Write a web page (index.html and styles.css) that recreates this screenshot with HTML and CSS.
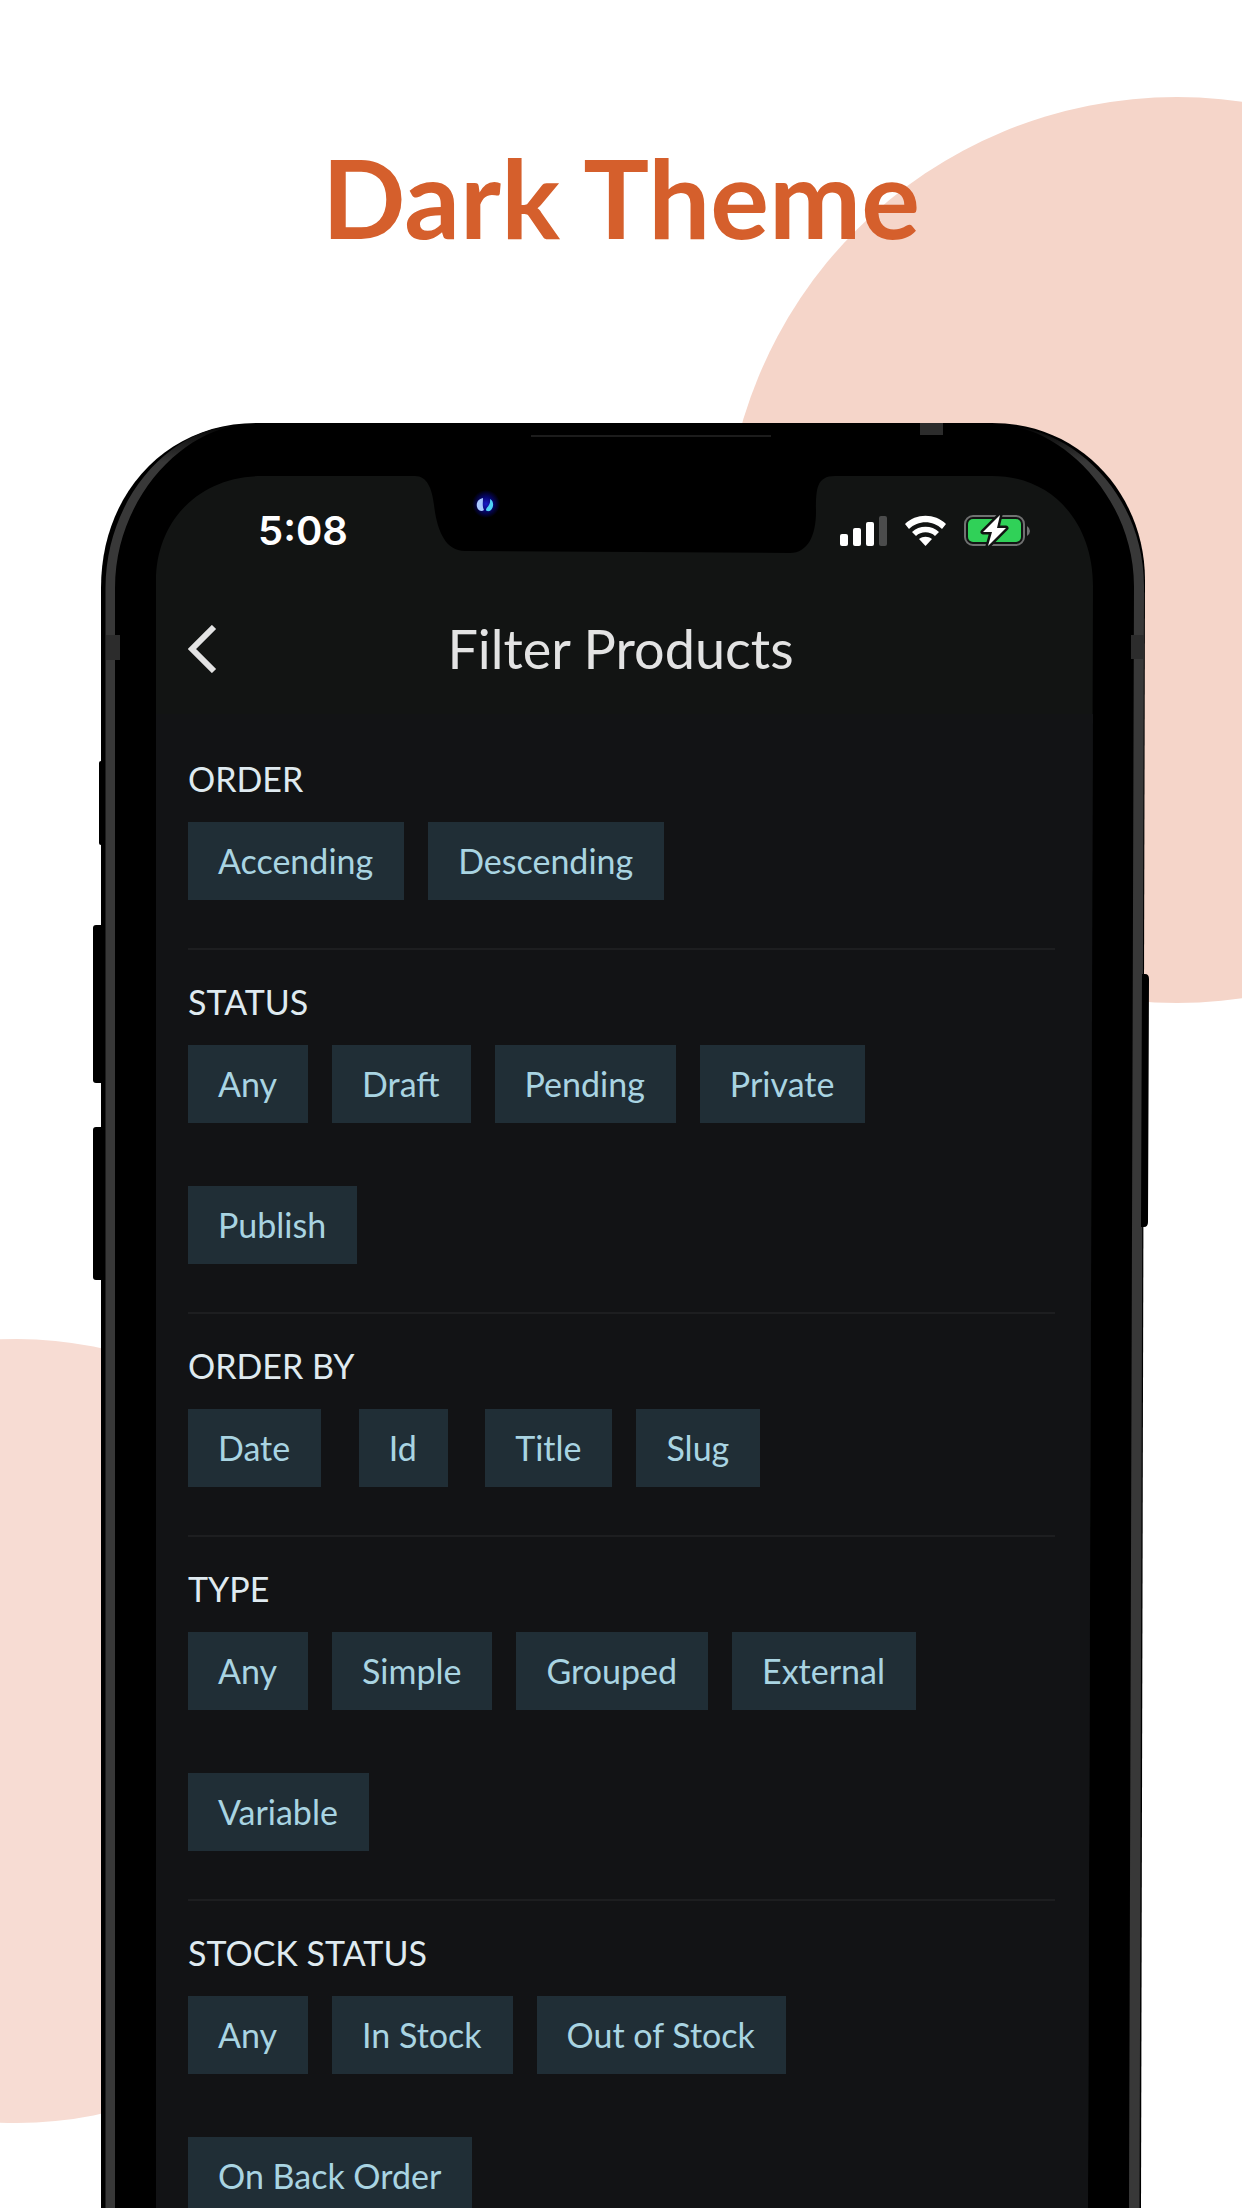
FILE: index.html
```html
<!DOCTYPE html>
<html lang="en">
<head>
<meta charset="utf-8">
<meta name="viewport" content="width=device-width, initial-scale=1">
<title>Dark Theme</title>
<link rel="stylesheet" href="styles.css">
</head>
<body>
<main class="poster">
  <div class="circle circle-right"></div>
  <div class="circle circle-left"></div>
  <h1 class="headline">Dark Theme</h1>

  <div class="phone">
    <svg class="frame" viewBox="93 423 1056 1785" aria-hidden="true">
      <defs>
        <radialGradient id="lens">
          <stop offset="0" stop-color="#1a1ac8"/>
          <stop offset=".5" stop-color="#06066e"/>
          <stop offset="1" stop-color="#000"/>
        </radialGradient>
        <linearGradient id="rail" x1="0" y1="423" x2="0" y2="620" gradientUnits="userSpaceOnUse">
          <stop offset=".03" stop-color="#080808"/>
          <stop offset=".2" stop-color="#383838"/>
        </linearGradient>
      </defs>
      <!-- side buttons -->
      <rect x="99" y="761" width="8" height="84" rx="2"/>
      <rect x="93" y="925" width="14" height="158" rx="3"/>
      <rect x="93" y="1127" width="14" height="153" rx="3"/>
      <!-- body -->
      <path d="M101 2208V588C101 492 168 423 256 423H992C1082 423 1145 496 1145 580L1141 2208Z"/>
      <path d="M105.500 2208V588C106 496 172 428 235 426C180 434 115 500 115 588V2208Z" fill="url(#rail)"/>
      <path d="M1144 586C1144 500 1080 432 1010 426C1065 432 1134 500 1134 586L1129 2208H1139.500Z" fill="url(#rail)"/>
      <path d="M1142 974h3q4 0 4 5l-1 243q0 5-4 5h-3z"/>
      <path d="M106 635h14v25h-14zM1131 635h13v24h-13zM920 423h23v12h-23z" fill="#2c2c2c"/>
      <path d="M531 436h240" stroke="#1c1c1c" stroke-width="2"/>
      <!-- screen -->
      <path fill="#121413" d="M156 2208V581C156 520 200 476 262 476H415C427 476 432 488 434 505C437 530 445 551 465 551L790 553C808 553 816 535 816 512C816 490 816 476 835 476H992C1052 476 1093 522 1093 586L1088 2208Z"/>
      <path fill="#121315" d="M156 714H1093L1088 2208H156Z"/>
      <!-- camera -->
      <circle cx="486" cy="504" r="14" fill="url(#lens)"/>
      <path d="M483 498c-5 1-7 5-6 9s5 5 7 3c-2-4-1-8-1-12z" fill="#a8c8ff"/>
      <path d="M490 499c4 2 4 8 1 11-2 2-5 1-5 0 0-3 5-4 4-11z" fill="#4fd3f5"/>
    </svg>

    <div class="screen">
      <div class="status-bar">
        <span class="clock">5:08</span>
        <svg class="status-icons" width="192" height="34" viewBox="0 0 192 34" role="img" aria-label="Signal, Wi-Fi, battery charging">
          <g fill="#fff">
            <rect x="0" y="20" width="8" height="12" rx="2"/>
            <rect x="13" y="14" width="8" height="18" rx="2"/>
            <rect x="26" y="8" width="8" height="24" rx="2"/>
            <rect x="39" y="2" width="8" height="30" rx="2" fill="#4b4c4c"/>
            <path d="M65 10C76-1 95-1 106 10L102 15C93 6 78 6 69 15Z"/>
            <path d="M72 18C79 11 92 11 99 18L95 22C90 17 81 17 76 22Z"/>
            <path d="M79 25C83 22 88 22 92 25L85.500 32Z"/>
          </g>
          <rect x="125" y="2" width="59" height="29" rx="8" fill="none" stroke="#707171" stroke-width="2"/>
          <rect x="128" y="5" width="53" height="23" rx="5" fill="#30d158"/>
          <path d="M187 12q3 2 3 5t-3 5z" fill="#707171"/>
          <path d="M160 1L143 18h9l-4 14 18-18h-9z" fill="#fff" stroke="#121413" stroke-width="5" stroke-linejoin="round" paint-order="stroke"/>
        </svg>
      </div>

      <header class="app-bar">
        <button class="back" type="button" aria-label="Back">
          <svg width="30" height="48" viewBox="0 0 30 48" aria-hidden="true"><path d="M26 2L4 24L26 46" fill="none" stroke="#e3e3e3" stroke-width="6"/></svg>
        </button>
        <h2 class="title">Filter Products</h2>
      </header>

      <form class="filters">
        <section class="group">
          <h3 class="label">ORDER</h3>
          <ul class="chips">
            <li><button class="chip" type="button">Accending</button></li>
            <li><button class="chip" type="button">Descending</button></li>
          </ul>
        </section>
        <section class="group">
          <h3 class="label">STATUS</h3>
          <ul class="chips">
            <li><button class="chip" type="button">Any</button></li>
            <li><button class="chip" type="button">Draft</button></li>
            <li><button class="chip" type="button">Pending</button></li>
            <li><button class="chip" type="button">Private</button></li>
            <li><button class="chip" type="button">Publish</button></li>
          </ul>
        </section>
        <section class="group">
          <h3 class="label">ORDER BY</h3>
          <ul class="chips">
            <li><button class="chip" type="button">Date</button></li>
            <li><button class="chip" type="button">Id</button></li>
            <li><button class="chip" type="button">Title</button></li>
            <li><button class="chip" type="button">Slug</button></li>
          </ul>
        </section>
        <section class="group">
          <h3 class="label">TYPE</h3>
          <ul class="chips">
            <li><button class="chip" type="button">Any</button></li>
            <li><button class="chip" type="button">Simple</button></li>
            <li><button class="chip" type="button">Grouped</button></li>
            <li><button class="chip" type="button">External</button></li>
            <li><button class="chip" type="button">Variable</button></li>
          </ul>
        </section>
        <section class="group">
          <h3 class="label">STOCK STATUS</h3>
          <ul class="chips">
            <li><button class="chip" type="button">Any</button></li>
            <li><button class="chip" type="button">In Stock</button></li>
            <li><button class="chip" type="button">Out of Stock</button></li>
            <li><button class="chip" type="button">On Back Order</button></li>
          </ul>
        </section>
      </form>
    </div>
  </div>
</main>
</body>
</html>
```
FILE: styles.css
```css
* {
  box-sizing: border-box;
}

body {
  margin: 0;
  background: #fff;
  font-family: Lato, "Liberation Sans", sans-serif;
}

h1, h2, h3, ul {
  margin: 0;
  padding: 0;
  font-weight: 400;
}

.poster {
  position: relative;
  height: 100vh;
  overflow: hidden;
}

/* background circles */
.circle {
  position: absolute;
  border-radius: 50%;
}

.circle-right {
  top: 97px;
  right: -388px;
  width: 906px;
  height: 906px;
  background: #f5d5c9;
}

.circle-left {
  top: 1339px;
  left: -375px;
  width: 784px;
  height: 784px;
  background: #f7dcd3;
}

.headline {
  position: relative;
  padding: 130px 0 161px;
  color: #d55f2c;
  font-size: 110px;
  font-weight: 700;
  line-height: 132px;
  text-align: center;
}

.phone {
  position: relative;
  margin: 0 93px;
}

.frame {
  position: absolute;
  top: 0;
  left: 0;
  width: 100%;
}

.screen {
  position: relative;
  margin: 0 56px 0 63px;
  padding-top: 84px;
}

.status-bar {
  display: flex;
  align-items: center;
  justify-content: space-between;
  height: 48px;
  padding: 0 61px 0 102px;
}

.clock {
  color: #fff;
  font: 600 40px/48px Inter, "Liberation Sans", sans-serif;
}

.app-bar {
  display: grid;
  grid-template-columns: 64px 1fr 72px;
  align-items: center;
  padding: 62px 32px 32px;
}

.back {
  display: flex;
  padding: 0;
  border: 0;
  background: none;
}

.title {
  color: #e3e3e3;
  font-size: 54px;
  line-height: 64px;
  text-align: center;
}

.filters {
  padding: 0 38px 0 32px;
}

.group {
  padding: 32px 0 48px;
  border-top: 2px solid #1d1e20;
}

.group:first-child {
  margin-top: 12px;
  border-top-color: transparent;
}

.label {
  margin-bottom: 23px;
  color: #dfeaf0;
  font-size: 34px;
  line-height: 40px;
}

.chips {
  display: flex;
  flex-wrap: wrap;
  row-gap: 63px;
  list-style: none;
}

.chips li {
  display: flex;
  justify-content: center;
  min-width: 116px;
  margin-right: 24px;
}

.chip {
  height: 78px;
  padding: 0 31px 0 30px;
  border: 0;
  background: #202e36;
  color: #a9d4e2;
  font: 400 34px/40px Lato, "Liberation Sans", sans-serif;
}
```
